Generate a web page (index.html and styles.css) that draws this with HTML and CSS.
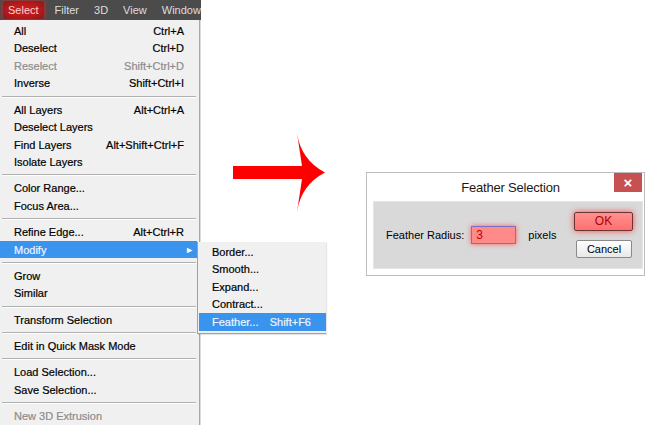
FILE: index.html
```html
<!DOCTYPE html>
<html lang="en">
<head>
    <meta charset="UTF-8">
    <meta name="viewport" content="width=device-width, initial-scale=1.0">
    <title>Feather Selection</title>
    <link rel="stylesheet" href="styles.css">
</head>
<body>
    <div class="page">
        <div class="ps">
            <div class="menubar">
                <span class="bar-item active">Select</span>
                <span class="bar-item">Filter</span>
                <span class="bar-item">3D</span>
                <span class="bar-item">View</span>
                <span class="bar-item">Window</span>
            </div>
            <div class="menu">
                <div class="row"><span>All</span><span>Ctrl+A</span></div>
                <div class="row"><span>Deselect</span><span>Ctrl+D</span></div>
                <div class="row disabled"><span>Reselect</span><span>Shift+Ctrl+D</span></div>
                <div class="row"><span>Inverse</span><span>Shift+Ctrl+I</span></div>
                <div class="sep"></div>
                <div class="row"><span>All Layers</span><span>Alt+Ctrl+A</span></div>
                <div class="row"><span>Deselect Layers</span></div>
                <div class="row"><span>Find Layers</span><span>Alt+Shift+Ctrl+F</span></div>
                <div class="row"><span>Isolate Layers</span></div>
                <div class="sep"></div>
                <div class="row"><span>Color Range...</span></div>
                <div class="row"><span>Focus Area...</span></div>
                <div class="sep"></div>
                <div class="row"><span>Refine Edge...</span><span>Alt+Ctrl+R</span></div>
                <div class="row selected"><span>Modify</span><span class="caret">&#9656;</span></div>
                <div class="sep"></div>
                <div class="row"><span>Grow</span></div>
                <div class="row"><span>Similar</span></div>
                <div class="sep"></div>
                <div class="row"><span>Transform Selection</span></div>
                <div class="sep"></div>
                <div class="row"><span>Edit in Quick Mask Mode</span></div>
                <div class="sep"></div>
                <div class="row"><span>Load Selection...</span></div>
                <div class="row"><span>Save Selection...</span></div>
                <div class="sep"></div>
                <div class="row disabled"><span>New 3D Extrusion</span></div>
            </div>

            <div class="submenu">
                <div class="row"><span>Border...</span></div>
                <div class="row"><span>Smooth...</span></div>
                <div class="row"><span>Expand...</span></div>
                <div class="row"><span>Contract...</span></div>
                <div class="row selected"><span class="sub-label">Feather...</span><span>Shift+F6</span></div>
            </div>
        </div>

        <div class="stage">
            <svg class="arrow" width="93" height="81" viewBox="0 0 93 81">
                <path d="M0,34 H69 L64,1 Q68,28 92,40.5 Q68,53 64,80 L69,47 H0 Z" fill="#ff0000"/>
            </svg>

            <div class="dialog">
                <div class="title-bar">
                    <span class="title">Feather Selection</span>
                    <span class="close">&times;</span>
                </div>
                <div class="panel">
                    <label class="field-label">Feather Radius:</label>
                    <div class="field">3</div>
                    <span class="unit">pixels</span>
                    <div class="buttons">
                        <div class="btn ok">OK</div>
                        <div class="btn cancel">Cancel</div>
                    </div>
                </div>
            </div>
        </div>
    </div>
</body>
</html>
```

FILE: styles.css
```css
body {
    margin: 0;
    background-color: #ffffff;
    font-family: "Liberation Sans", Arial, sans-serif;
    font-size: 11px;
    color: #000;
}

.page {
    display: flex;
    height: 425px;
    overflow: hidden;
    position: relative;
}

.ps {
    width: 201px;
    flex-shrink: 0;
}

.menubar {
    display: flex;
    align-items: center;
    gap: 7px;
    height: 20px;
    padding-left: 3px;
    background-color: #4b4b4b;
    overflow: hidden;
    white-space: nowrap;
}

.bar-item {
    padding: 0 4px;
    line-height: 18px;
    color: #dedede;
}

.bar-item.active {
    padding: 0 5px;
    color: #ffd0d0;
    border-radius: 3px;
    background: radial-gradient(ellipse at center, #d02020 0%, #b41818 60%, #7a2020 100%);
    box-shadow: 0 0 5px #e02828;
}

.menu {
    background-color: #f0f0f0;
    border-right: 1px solid #a8a8a8;
    box-shadow: 1px 0 0 #dcdcdc;
    width: 199px;
    height: 405px;
    padding-top: 2px;
}

.row {
    display: flex;
    justify-content: space-between;
    align-items: center;
    height: 17.5px;
    padding: 0 15px 0 14px;
    white-space: nowrap;
    -webkit-text-stroke: 0.2px currentColor;
}

.row.disabled {
    color: #8c8c8c;
}

.row.selected {
    background-color: #3a94ee;
    color: #eef5ff;
}

.menu .row.selected {
    margin-right: 2px;
    padding-right: 5px;
}

.caret {
    font-size: 10px;
    color: #ffffff;
}

.sep {
    height: 1px;
    background-color: #b0b0b0;
    border-bottom: 1px solid #ffffff;
    margin: 3.5px 3px 3.25px 2px;
}

.submenu {
    position: absolute;
    left: 197px;
    top: 242px;
    width: 127px;
    padding: 1px 0 2px 1px;
    background-color: #f0f0f0;
    border-left: 1px solid #a0a0a0;
    border-bottom: 1px solid #a0a0a0;
    box-shadow: 1px 1px 1px rgba(0,0,0,0.1);
}

.submenu .row {
    justify-content: flex-start;
    padding-left: 13px;
}

.sub-label {
    width: 59px;
}

.stage {
    display: flex;
    align-items: flex-start;
}

.arrow {
    margin-left: 32px;
    margin-top: 132px;
    flex-shrink: 0;
}

.dialog {
    margin-left: 40px;
    margin-top: 172px;
    width: 270px;
    border: 1px solid #bcbcbc;
    background-color: #ffffff;
    padding: 0 1px 6px 6px;
}

.title-bar {
    position: relative;
    height: 28px;
    display: flex;
    align-items: center;
    justify-content: center;
}

.title {
    font-size: 13px;
    letter-spacing: -0.2px;
    color: #1a1a1a;
    padding-left: 5px;
}

.close {
    position: absolute;
    top: 0;
    right: 1px;
    width: 28px;
    height: 19px;
    background-color: #c75050;
    color: #ffffff;
    font-size: 15px;
    font-weight: bold;
    line-height: 19px;
    text-align: center;
}

.panel {
    display: flex;
    align-items: center;
    height: 66px;
    padding: 0 10px 0 12px;
    background-color: #d9d9d9;
    border: 1px solid #e4e4e4;
}

.field-label {
    color: #000;
}

.field {
    margin-left: 7px;
    width: 39px;
    height: 16px;
    padding-left: 4px;
    line-height: 16px;
    background-color: #ff8a8a;
    border: 1px solid #7c6fc8;
    box-shadow: 0 0 5px #ff5a5a;
    color: #c00000;
    font-size: 12px;
}

.unit {
    margin-left: 12px;
}

.buttons {
    margin-left: auto;
    display: flex;
    flex-direction: column;
    align-items: flex-end;
    gap: 9px;
}

.btn {
    text-align: center;
    border-radius: 2px;
}

.btn.ok {
    width: 57px;
    height: 17px;
    line-height: 17px;
    margin-right: -1px;
    background: linear-gradient(#ff9090, #ff7070);
    border: 1px solid #6a3434;
    box-shadow: 0 0 6px #ff4848;
    color: #b00000;
    font-size: 12px;
}

.btn.cancel {
    width: 54px;
    height: 16px;
    line-height: 16px;
    background: linear-gradient(#ffffff, #e8e8e8);
    border: 1px solid #8a8a8a;
}
```
